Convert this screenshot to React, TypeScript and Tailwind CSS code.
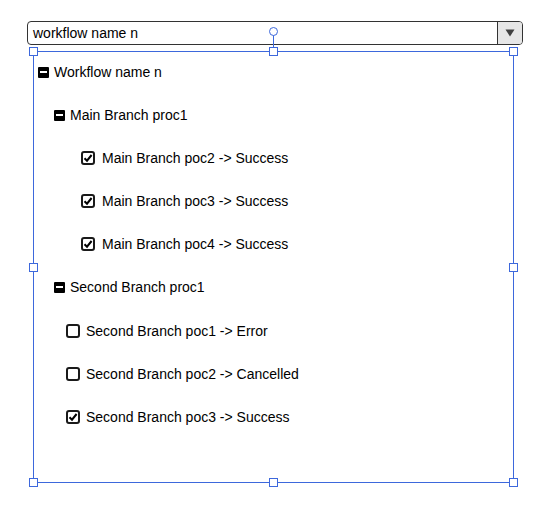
import React from "react";

const font = { fontFamily: '"Liberation Sans", Arial, sans-serif' };

const MinusBox = () => (
  <span className="w-[11px] h-[11px] bg-black rounded-[1px] flex items-center justify-center shrink-0">
    <span className="w-[7px] h-[2px] bg-white" />
  </span>
);

const Check = ({ checked }: { checked: boolean }) => (
  <span className="w-[14px] h-[14px] border-2 border-[#1a1a1a] rounded-[3px] flex items-center justify-center shrink-0 bg-white">
    {checked && (
      <svg width="10" height="10" viewBox="0 0 10 10">
        <path d="M1.5 5.2 L4 7.7 L8.6 2" stroke="#000" strokeWidth="2" fill="none" />
      </svg>
    )}
  </span>
);

type Row = { kind: "node" | "leaf"; cls: string; label: string; checked?: boolean };

const rows: Row[] = [
  { kind: "node", cls: "pl-[4px] gap-[5px]", label: "Workflow name n" },
  { kind: "node", cls: "pl-[20px] gap-[5px]", label: "Main Branch proc1" },
  { kind: "leaf", cls: "pl-[47px] gap-[7px]", label: "Main Branch poc2 -> Success", checked: true },
  { kind: "leaf", cls: "pl-[47px] gap-[7px]", label: "Main Branch poc3 -> Success", checked: true },
  { kind: "leaf", cls: "pl-[47px] gap-[7px]", label: "Main Branch poc4 -> Success", checked: true },
  { kind: "node", cls: "pl-[20px] gap-[5px]", label: "Second Branch proc1" },
  { kind: "leaf", cls: "pl-[32px] gap-[6px]", label: "Second Branch poc1 -> Error", checked: false },
  { kind: "leaf", cls: "pl-[32px] gap-[6px]", label: "Second Branch poc2 -> Cancelled", checked: false },
  { kind: "leaf", cls: "pl-[32px] gap-[6px]", label: "Second Branch poc3 -> Success", checked: true },
];

const Handle = ({ pos }: { pos: string }) => (
  <span className={`absolute w-[9px] h-[9px] bg-white border border-[#3d68dc] ${pos}`} />
);

export default function App() {
  return (
    <div className="w-[538px] h-[509px] bg-white text-black text-[14px] relative overflow-hidden" style={font}>
      <div className="ml-[27px] mt-[21px] w-[496px] h-[24px] flex border border-[#333] rounded-[4px] overflow-hidden">
        <div className="flex-1 flex items-center pl-[5px] leading-none">workflow name n</div>
        <div className="w-[25px] bg-[#e6e6e6] border-l border-[#333] flex items-center justify-center">
          <svg width="10" height="8" viewBox="0 0 10 8">
            <path d="M0.5 0.5 L9.5 0.5 L5 7.5 Z" fill="#404040" />
          </svg>
        </div>
      </div>

      <div className="ml-[33px] mt-[6px] w-[481px] h-[432px] border border-[#3d68dc] relative">
        <div className="flex flex-col gap-[23.1px] pt-[10px]">
          {rows.map((r, i) => (
            <div key={i} className={`h-[20px] flex items-center ${r.cls}`}>
              {r.kind === "node" ? <MinusBox /> : <Check checked={!!r.checked} />}
              <span className="leading-none">{r.label}</span>
            </div>
          ))}
        </div>

        <Handle pos="-left-[5px] -top-[5px]" />
        <Handle pos="left-[235px] -top-[5px]" />
        <Handle pos="-right-[5px] -top-[5px]" />
        <Handle pos="-left-[5px] top-[211px]" />
        <Handle pos="-right-[5px] top-[211px]" />
        <Handle pos="-left-[5px] -bottom-[5px]" />
        <Handle pos="left-[235px] -bottom-[5px]" />
        <Handle pos="-right-[5px] -bottom-[5px]" />
        <span className="absolute left-[239px] -top-[18px] w-px h-[13px] bg-[#3d68dc]" />
        <span className="absolute left-[235px] -top-[25px] w-[9px] h-[9px] rounded-full bg-white border border-[#3d68dc]" />
      </div>
    </div>
  );
}
